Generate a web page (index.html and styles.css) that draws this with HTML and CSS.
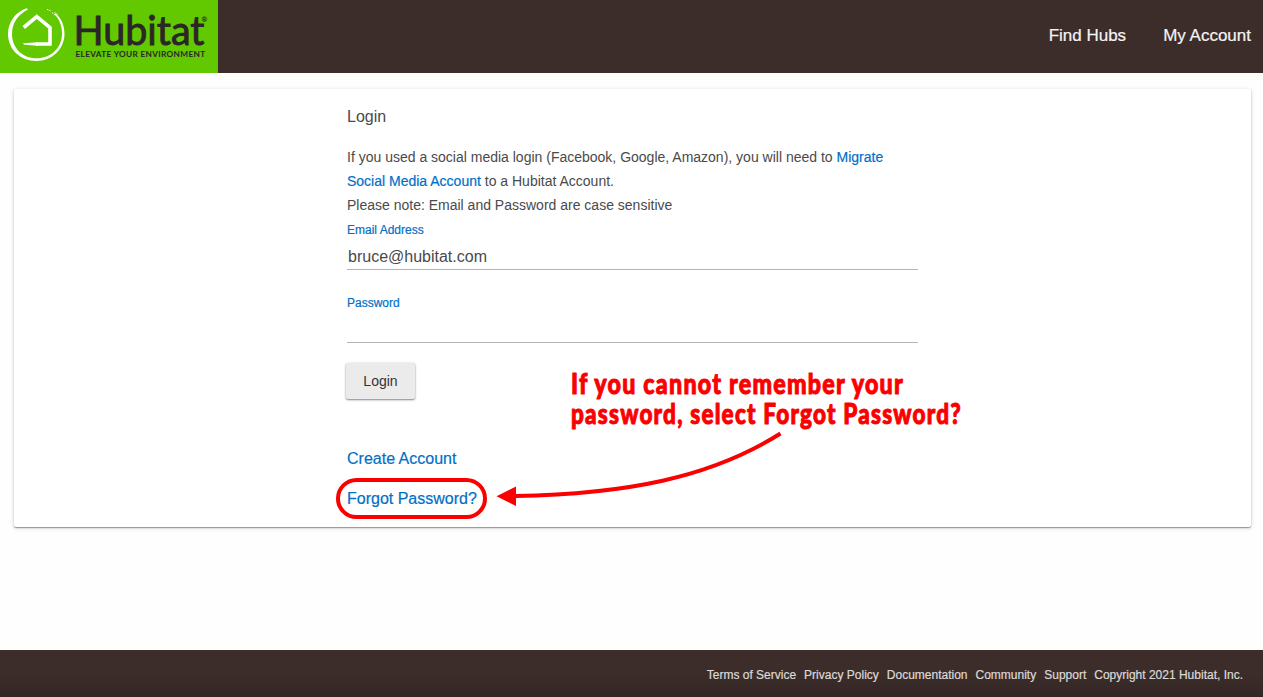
FILE: index.html
```html
<!DOCTYPE html>
<html lang="en">
<head>
    <meta charset="UTF-8">
    <meta name="viewport" content="width=device-width, initial-scale=1.0">
    <title>Hubitat - Login</title>
    <link rel="stylesheet" href="styles.css">
</head>
<body>
    <header class="header">
        <a class="logo" href="#">
            <svg width="218" height="73" viewBox="0 0 218 73">
                <path class="ring" d="M26.500 8.300C15.500 12 8 22 8 34C8 49 20 61 36.500 61C52 61 64.500 49 64.500 34C64.500 25 61 18 55.500 13.500L54.500 14.500C59.500 19 62 26 62 33.500C62 48 51 58.300 36.500 58.300C22.500 58.300 12 48 12 34C12 23 18 14.500 28 9.500Z"/>
                <path class="ring-dots" d="M47 9.300L51 11M52 12.500L55 15M54.500 12.500L58 14.500"/>
                <path class="house" d="M23.700 27.500L36.800 16.500L50 27.500V44H36"/>
                <path class="ring" d="M23 43.300L38 42.300V45.700L24 44.800Z"/>
                <text class="logo-name" x="73.500" y="45" textLength="131" lengthAdjust="spacingAndGlyphs">Hubitat</text>
                <text class="logo-reg" x="201.500" y="22">®</text>
                <text class="logo-tag" x="75.500" y="56.800" textLength="130" lengthAdjust="spacingAndGlyphs">ELEVATE YOUR ENVIRONMENT</text>
            </svg>
        </a>
        <nav class="nav">
            <a href="#">Find Hubs</a>
            <a href="#">My Account</a>
        </nav>
    </header>
    <main class="card">
        <form class="login">
            <h1>Login</h1>
            <p>If you used a social media login (Facebook, Google, Amazon), you will need to <a href="#">Migrate Social Media Account</a> to a Hubitat Account.<br>Please note: Email and Password are case sensitive</p>
            <label for="email">Email Address</label>
            <input type="text" id="email" value="bruce@hubitat.com">
            <label for="password">Password</label>
            <input type="password" id="password">
            <button type="button">Login</button>
            <div class="links">
                <a href="#">Create Account</a>
                <a href="#" class="forgot">Forgot Password?</a>
            </div>
        </form>
        <svg class="note" width="480" height="170" viewBox="490 360 480 170">
            <text x="571" y="393.500" textLength="333" lengthAdjust="spacingAndGlyphs">If you cannot remember your</text>
            <text x="571" y="423.500" textLength="391" lengthAdjust="spacingAndGlyphs">password, select Forgot Password?</text>
            <path class="arrow" d="M780.500 433.500C710 478 625 494 515 496"/>
            <path class="arrow-head" d="M496.500 496.300L516 486.500V506Z"/>
        </svg>
    </main>
    <footer class="footer">
        <a href="#">Terms of Service</a>
        <a href="#">Privacy Policy</a>
        <a href="#">Documentation</a>
        <a href="#">Community</a>
        <a href="#">Support</a>
        <span>Copyright 2021 Hubitat, Inc.</span>
    </footer>
</body>
</html>
```
FILE: styles.css
```css
* {
    box-sizing: border-box;
}
body {
    margin: 0;
    height: 100vh;
    display: flex;
    flex-direction: column;
    overflow: hidden;
    background: #fefefe;
    color: #4a4a4a;
    font-family: "Liberation Sans", Arial, sans-serif;
}
a {
    color: #0070c9;
    text-decoration: none;
    -webkit-text-stroke: 0.2px;
}
.header {
    display: flex;
    justify-content: space-between;
    height: 73px;
    flex-shrink: 0;
    background: #3c2d2a;
}
.logo {
    width: 218px;
    height: 73px;
    background: #62c900;
}
.logo svg {
    display: block;
}
.ring {
    fill: #fff;
}
.ring-dots {
    fill: none;
    stroke: #fff;
    stroke-width: 0.9;
    stroke-dasharray: 1.5 0.8;
}
.house {
    fill: none;
    stroke: #fff;
    stroke-width: 3.6;
}
.logo-name,
.logo-tag,
.logo-reg {
    font-family: Lato, sans-serif;
    fill: #2b2627;
    -webkit-text-stroke: 0;
}
.logo-name {
    font-size: 41px;
    stroke: #2b2627;
    stroke-width: 0.9;
}
.logo-tag {
    font-size: 7.6px;
    font-weight: bold;
    letter-spacing: 0.3px;
}
.logo-reg {
    font-size: 7px;
    font-weight: bold;
}
.nav {
    display: flex;
    gap: 37px;
    padding: 26px 12px 0 0;
    font-size: 17px;
    line-height: 20px;
}
.nav a {
    color: #f5f3f3;
}
.card {
    position: relative;
    height: 438px;
    flex-shrink: 0;
    margin: 16px 12px 0 14px;
    background: #fff;
    border-radius: 2px;
    box-shadow: 0 1px 1px rgba(0, 0, 0, 0.35), 0 1px 4px rgba(0, 0, 0, 0.18);
}
.login {
    display: flex;
    flex-direction: column;
    width: 571px;
    margin-left: 333px;
    padding-top: 16px;
}
h1 {
    margin: 0 0 16px;
    font-size: 16px;
    font-weight: normal;
    line-height: 24px;
}
p {
    margin: 0;
    font-size: 14px;
    line-height: 24px;
}
label {
    padding-top: 1px;
    color: #0070c9;
    font-size: 12px;
    line-height: 24px;
    -webkit-text-stroke: 0.2px;
}
input {
    height: 28px;
    margin: 0 0 20px;
    padding: 3px 0 0 1px;
    border: 0;
    border-bottom: 1px solid #b5b5b5;
    background: none;
    color: #4a4a4a;
    font-family: inherit;
    font-size: 16px;
    outline: none;
}
button {
    width: 69px;
    height: 36px;
    margin-left: -1px;
    padding: 0;
    border: 0;
    border-radius: 2px;
    background: #ebebeb;
    color: #333;
    font-family: inherit;
    font-size: 14px;
    box-shadow: 0 1px 2px rgba(0, 0, 0, 0.45), 0 0 3px rgba(0, 0, 0, 0.1);
}
.links {
    display: flex;
    flex-direction: column;
    align-items: flex-start;
    margin-top: 50px;
    font-size: 16px;
    line-height: 20px;
}
.forgot {
    margin: 9px 0 0 -11px;
    padding: 7px;
    border: 4px solid #fb0000;
    border-radius: 21px;
    width: 151px;
    height: 41px;
    line-height: 19px;
    white-space: nowrap;
}
.note {
    position: absolute;
    left: 476px;
    top: 271px;
    overflow: visible;
    pointer-events: none;
}
.note text {
    font-family: Lato, sans-serif;
    font-size: 28px;
    font-weight: 900;
    letter-spacing: 1.5px;
    fill: #fb0000;
    stroke: #fb0000;
    stroke-width: 1;
    stroke-linejoin: round;
}
.arrow {
    fill: none;
    stroke: #fb0000;
    stroke-width: 4;
}
.arrow-head {
    fill: #fb0000;
}
.footer {
    display: flex;
    justify-content: flex-end;
    gap: 8px;
    height: 47px;
    flex-shrink: 0;
    margin-top: auto;
    padding: 17px 20px 0 0;
    background: linear-gradient(#3c2d2a 50%, #332624);
    color: #dcd9d8;
    font-size: 12px;
    line-height: 16px;
    -webkit-text-stroke: 0.2px;
}
.footer a {
    color: #dcd9d8;
}
```
